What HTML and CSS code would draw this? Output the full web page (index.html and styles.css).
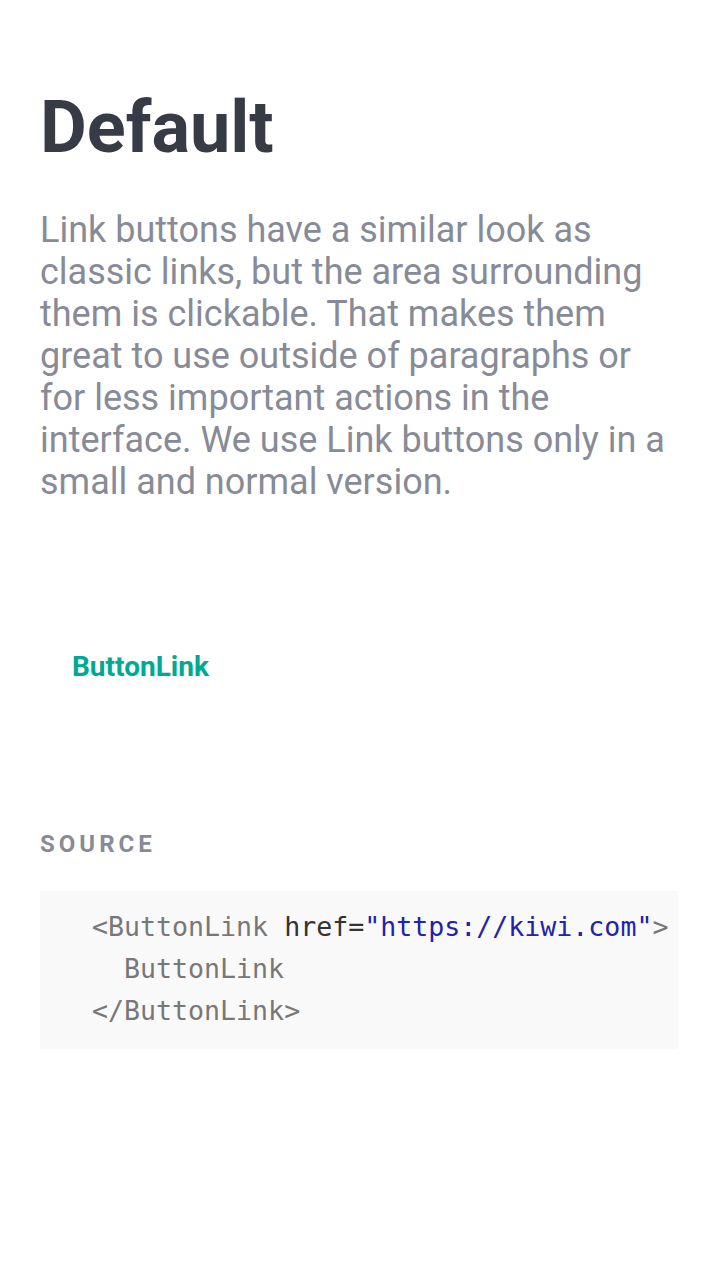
FILE: index.html
```html
<!DOCTYPE html>
<html>
<head>
<meta charset="utf-8">
<link rel="stylesheet" href="styles.css">
</head>
<body>
<main class="page">
  <h1 class="title">Default</h1>
  <p class="lead">Link buttons have a similar look as classic links, but the area surrounding them is clickable. That makes them great to use outside of paragraphs or for less important actions in the interface. We use Link buttons only in a small and normal version.</p>
  <div class="example">
    <button class="button-link" type="button">ButtonLink</button>
  </div>
  <h2 class="label">Source</h2>
  <pre class="code"><span class="tag">&lt;ButtonLink</span> <span class="attr">href=</span><span class="str">"https://kiwi.com"</span><span class="tag">&gt;</span>
<span class="tag">  ButtonLink</span>
<span class="tag">&lt;/ButtonLink&gt;</span></pre>
</main>
</body>
</html>
```
FILE: styles.css
```css
html, body {
  margin: 0;
  padding: 0;
  background: #ffffff;
}
body {
  font-family: Roboto, "Liberation Sans", sans-serif;
}
.page {
  padding: 84px 40px 40px 40px;
}
.title {
  margin: 0;
  font-size: 72px;
  line-height: 88px;
  font-weight: 700;
  color: #363b46;
}
.lead {
  margin: 37px 0 0 0;
  font-size: 36px;
  line-height: 42px;
  color: #878b97;
}
.example {
  padding: 131px 0 0 0;
}
.button-link {
  display: inline-flex;
  align-items: center;
  height: 64px;
  padding: 0 32px;
  border: 0;
  background: transparent;
  font-family: Roboto, "Liberation Sans", sans-serif;
  font-size: 28px;
  font-weight: 700;
  color: #00a991;
  cursor: pointer;
}
.label {
  margin: 131px 0 0 0;
  font-size: 24px;
  line-height: 30px;
  font-weight: 700;
  letter-spacing: 4px;
  text-transform: uppercase;
  color: #878b97;
}
.code {
  margin: 32px 0 0 0;
  padding: 15px 52px 17px 52px;
  background: #f9f9f9;
  font-family: "DejaVu Sans Mono", monospace;
  font-size: 26.6px;
  line-height: 42px;
  color: #777777;
  white-space: pre;
  overflow: hidden;
}
.tag { color: #777777; }
.attr { color: #333333; }
.str { color: #2222aa; }
```
